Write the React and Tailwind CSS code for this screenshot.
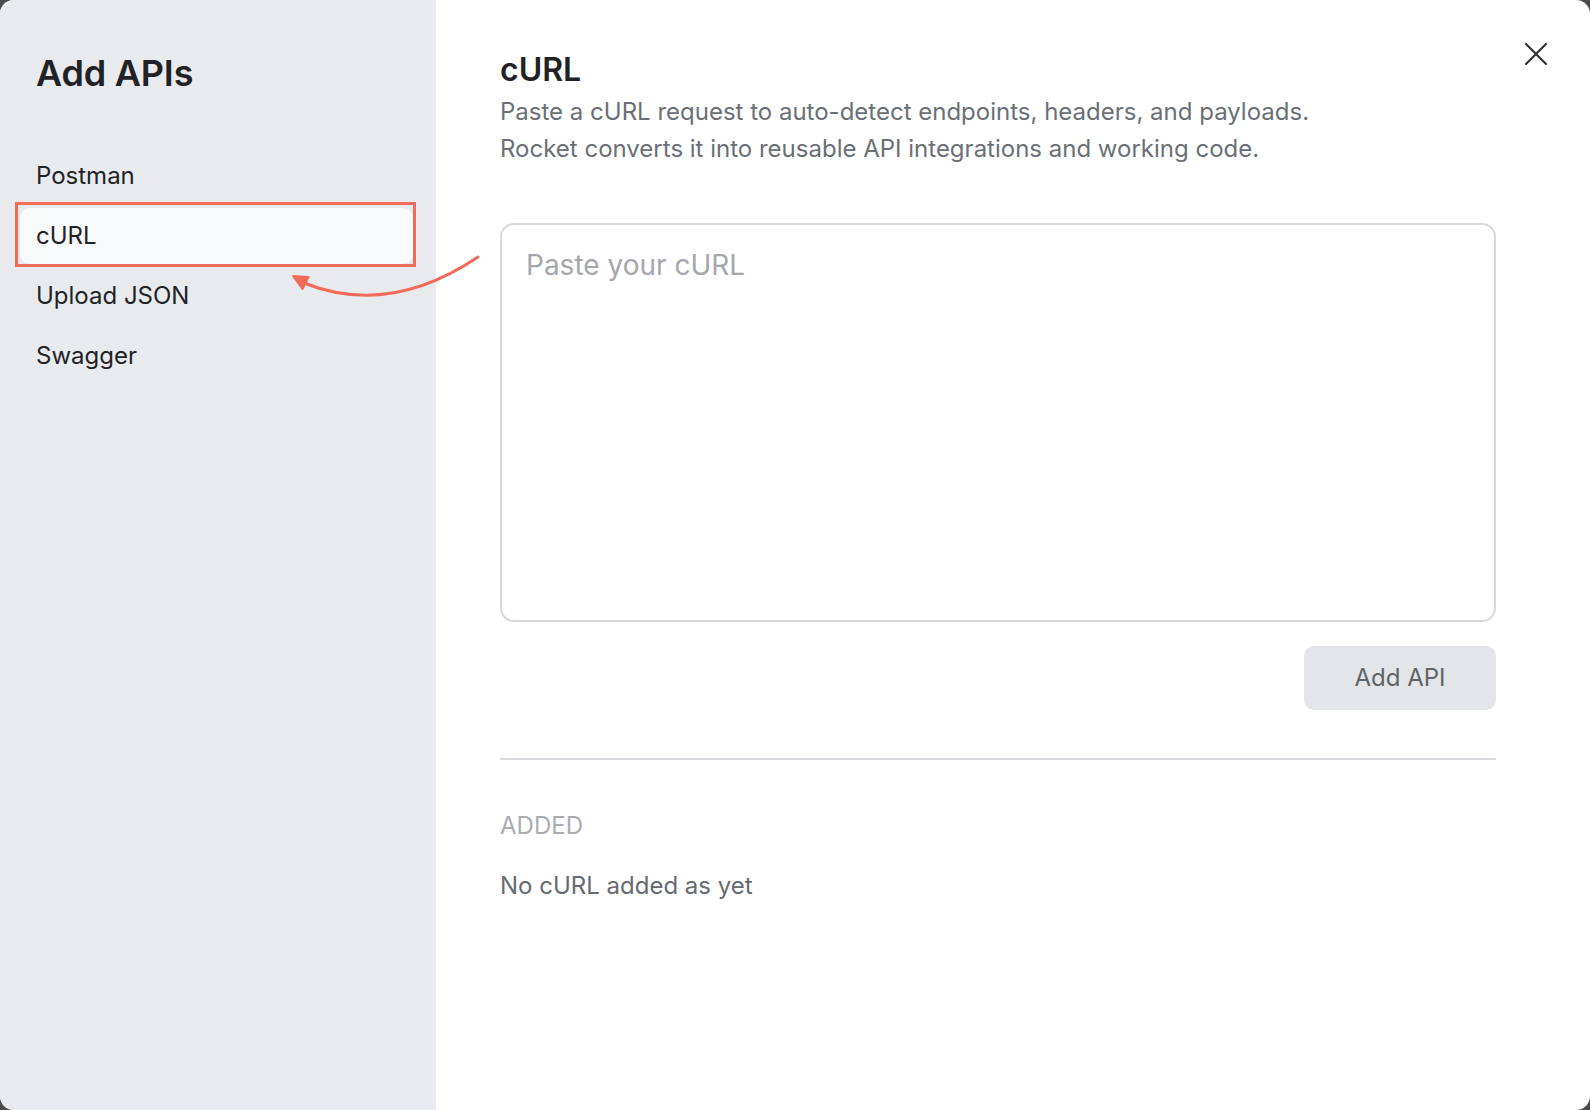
const sources = ['Postman', 'cURL', 'Upload JSON', 'Swagger'];

function CloseIcon() {
  return (
    <svg width="22" height="22" viewBox="0 0 22 22" fill="none" stroke="#2b2d31" strokeWidth="2" strokeLinecap="round">
      <path d="M1 1L21 21M21 1L1 21" />
    </svg>
  );
}

// Callout pointing from the editor back to the active source
function Callout() {
  return (
    <>
      <div className="absolute left-[15px] top-[202px] w-[401px] h-[65px] border-[3px] border-[#f26b5a] pointer-events-none" />
      <svg className="absolute left-0 top-0 pointer-events-none" width="500" height="320" viewBox="0 0 500 320" fill="none">
        <path d="M478 257 C432 288, 372 310, 304 283" stroke="#f26b5a" strokeWidth="3" strokeLinecap="round" />
        <path d="M293 276 L308.5 277 L302.5 289 Z" fill="#f26b5a" stroke="#f26b5a" strokeWidth="2" strokeLinejoin="round" />
      </svg>
    </>
  );
}

export default function App() {
  const active = 'cURL';
  return (
    <div className="w-[1590px] h-[1110px] bg-[#4a4a4a]" style={{ fontFamily: 'Inter, "Noto Sans", sans-serif' }}>
      <div className="relative flex h-full rounded-[14px] overflow-hidden bg-white">
        <aside className="w-[436px] shrink-0 bg-[#e9eaed] pt-[51px]">
          <h1 className="pl-[36px] text-[36px] leading-[44px] font-semibold text-[#1f2226] tracking-[-0.2px]">Add APIs</h1>
          <nav className="mt-[53px] flex flex-col gap-[4px] pl-[20px] pr-[23px]">
            {sources.map((s) => (
              <div
                key={s}
                className={`h-[56px] flex items-center px-[16px] rounded-[10px] text-[24px] text-[#1f2226] ${
                  s === active ? 'bg-[#f8f9fa]' : ''
                }`}
              >
                {s}
              </div>
            ))}
          </nav>
        </aside>

        <main className="flex-1 pl-[64px] pr-[94px] pt-[51px]">
          <h2 className="text-[32px] leading-[38px] font-semibold text-[#1f2226]">cURL</h2>
          <p className="mt-[5px] text-[24px] leading-[36.5px] text-[#6b6f76]">
            Paste a cURL request to auto-detect endpoints, headers, and payloads.
            <br />
            Rocket converts it into reusable API integrations and working code.
          </p>
          <textarea
            className="mt-[56px] block w-full h-[399px] resize-none rounded-[14px] border-2 border-[#d6d8dc] px-[24px] py-[22px] text-[28px] leading-[36px] text-[#1f2226] placeholder:text-[#a4a7ac] outline-none"
            placeholder="Paste your cURL"
          />
          <div className="mt-[24px] flex justify-end">
            <button className="w-[192px] h-[64px] rounded-[10px] bg-[#e3e5e8] text-[24px] text-[#5f636a]">Add API</button>
          </div>
          <div className="mt-[48px] h-[2px] bg-[#d8dadd]" />
          <div className="mt-[51px] text-[24px] leading-[30px] text-[#a9acb1]">ADDED</div>
          <div className="mt-[30px] text-[24px] leading-[30px] text-[#666a71]">No cURL added as yet</div>
        </main>

        <button className="absolute right-[43px] top-[43px]">
          <CloseIcon />
        </button>
        <Callout />
      </div>
    </div>
  );
}
